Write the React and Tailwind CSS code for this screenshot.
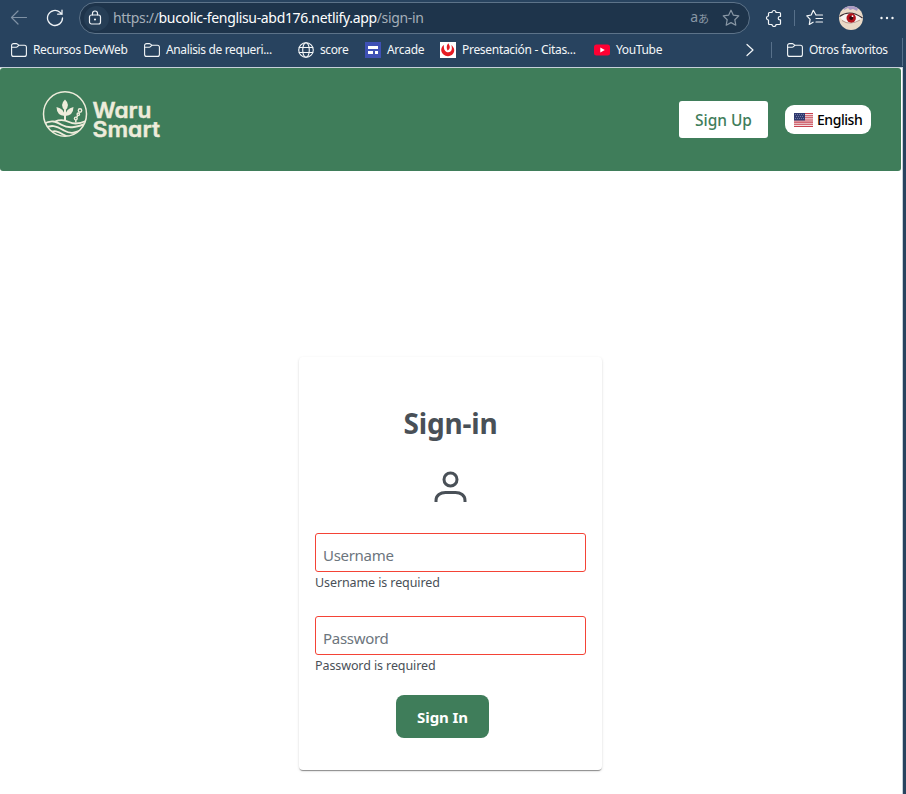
import React from "react";

const line = { fill: "none", stroke: "currentColor", strokeLinecap: "round", strokeLinejoin: "round" };

function Folder() {
  return (
    <svg className="block h-4 w-4 shrink-0" viewBox="0 0 16 16" {...line} strokeWidth="1.1">
      <path d="M.6 3.600a2 2 0 0 1 2-2h2.700c.5 0 .9.2 1.200.5L7.900 3.300h5.500a2 2 0 0 1 2 2v7.100a2 2 0 0 1-2 2H2.600a2 2 0 0 1-2-2z" />
      <path d="M.8 5.200h4.500c.5 0 .9-.2 1.200-.5l1.300-1.300" />
    </svg>
  );
}

function AddressBar() {
  return (
    <div className="flex h-9 w-full items-center">
      <svg className="ml-[10px] block h-[18px] w-[18px] text-[#7f91a4]" viewBox="0 0 18 18" {...line} strokeWidth="1.2">
        <path d="M16.500 8.500H1.500M8 2 1.500 8.500 8 15" />
      </svg>
      <svg className="ml-[18px] block h-[18px] w-[18px] text-[#eef2f6]" viewBox="0 0 18 18" {...line} strokeWidth="1.3">
        <path d="M16.500 9a7.500 7.500 0 1 1-2.600-5.700L16 5.200M16 1.200v4h-4.300" />
      </svg>
      <div className="ml-[15px] flex h-8 w-[671px] items-center rounded-full border border-[#5d7389] bg-[#1e344b] pl-1 pr-[9px]">
        <div className="flex h-[25px] w-[25px] items-center justify-center rounded-full bg-[#263e56]">
          <svg className="mr-[3px] block h-[16px] w-[14px] text-[#eef2f6]" viewBox="0 0 14 16" {...line} strokeWidth="1.200">
            <rect x="1.500" y="5" width="11" height="9" rx="2" />
            <path d="M4.500 4.800V3.500a2.500 2.500 0 0 1 5 0v1.300" />
            <circle cx="7" cy="9.500" r=".5" fill="currentColor" />
          </svg>
        </div>
        <div className="ml-1 whitespace-nowrap text-[14px] leading-5 tracking-[-0.335px] text-[#a5afb9]">
          https://<span className="text-white">bucolic-fenglisu-abd176.netlify.app</span>/sign-in
        </div>
        <div className="ml-auto flex items-center text-[#8997a5]">
          <span className="mb-[3px] text-[14px] leading-4">a</span>
          <span className="font-['Noto_Sans_CJK_JP',sans-serif] text-[11px] leading-4">あ</span>
          <svg className="ml-[13px] block h-[18px] w-[18px]" viewBox="0 0 18 18" {...line} strokeWidth="1.200">
            <path d="m9 1.200 2.400 5 5.400.7-4 3.800 1 5.500L9 13.600l-4.800 2.600 1-5.500-4-3.800 5.400-.7z" />
          </svg>
        </div>
      </div>
      <svg className="ml-[15px] block h-[18px] w-[18px] text-[#f3f6f8]" viewBox="0 0 18 18" {...line} strokeWidth="1.200">
        <path d="M4.500 3.500H7a2 2 0 0 1 4 0h3.500a1 1 0 0 1 1 1v3h-.6a1.700 1.700 0 0 0 0 3.400h.6v3.600a1 1 0 0 1-1 1H11a2 2 0 0 1-4 0H4.500a1 1 0 0 1-1-1V11a2 2 0 0 1 0-4V4.500a1 1 0 0 1 1-1z" />
      </svg>
      <div className="ml-[11px] h-4 w-px bg-[#57708a]" />
      <svg className="ml-[11px] block h-[18px] w-[18px] text-[#f3f6f8]" viewBox="0 0 18 18" {...line} strokeWidth="1.200">
        <path d="M10 6 7.300 1.300 5.200 6 .8 6.800l3.300 3.500-.8 5.200 3.800-2.300M10 6h6.500M10 9.500h6.500M10 13h6.500" />
      </svg>
      <svg className="ml-[15px] block h-6 w-6" viewBox="0 0 24 24">
        <defs>
          <clipPath id="avatar"><circle cx="12" cy="12" r="12" /></clipPath>
        </defs>
        <g clipPath="url(#avatar)">
          <rect width="24" height="24" fill="#ead9c6" />
          <path d="M4 0h16l-2 5-4-2-3 1-2-2-4 2z" fill="#a99ac4" />
          <path d="M1 11Q11 4 23 12Q17 18 11 17.500Q4 16 1 11z" fill="#f7f4f0" />
          <path d="M.5 10.500Q11 2.800 23.500 12" fill="none" stroke="#392b32" strokeWidth="1.200" />
          <path d="M3 14.500Q11 20 21 14" fill="none" stroke="#9b7469" strokeWidth=".7" />
          <circle cx="12.200" cy="12" r="4.700" fill="#b3131b" />
          <circle cx="12.200" cy="12" r="2" fill="#31090d" />
          <circle cx="13.500" cy="10.200" r=".9" fill="#fff" />
        </g>
      </svg>
      <svg className="ml-[16px] block h-4 w-4" viewBox="0 0 16 16" fill="#f3f6f8">
        <circle cx="2.500" cy="8" r="1.200" /><circle cx="8" cy="8" r="1.200" /><circle cx="13.500" cy="8" r="1.200" />
      </svg>
    </div>
  );
}

function Bookmark({ icon, label, className }) {
  return (
    <div className={`flex shrink-0 items-center ${className}`}>
      {icon}
      <span className="ml-[6px] whitespace-nowrap text-[12px] leading-4">{label}</span>
    </div>
  );
}

function Bookmarks() {
  return (
    <div className="flex h-7 w-full items-center pl-[11px] text-[#f3f6f8]">
      <Bookmark className="w-[133px] tracking-[-0.42px]" icon={<Folder />} label="Recursos DevWeb" />
      <Bookmark className="w-[154px] tracking-[-0.36px]" icon={<Folder />} label="Analisis de requeri..." />
      <Bookmark className="w-[67px] tracking-[-0.4px]" label="score" icon={
        <svg className="block h-4 w-4" viewBox="0 0 16 16" {...line} strokeWidth="1.100">
          <circle cx="8" cy="8" r="7.300" /><ellipse cx="8" cy="8" rx="3.300" ry="7.300" /><path d="M1.200 5.500h13.600M1.200 10.500h13.600" />
        </svg>} />
      <Bookmark className="w-[75px] tracking-[-0.3px]" label="Arcade" icon={
        <svg className="block h-4 w-4" viewBox="0 0 16 16">
          <rect width="16" height="16" fill="#3f51b5" /><path d="M3 4h10v3H3zM3 9h5v3H3zM10 9h3v3h-3z" fill="#fff" />
        </svg>} />
      <Bookmark className="w-[154px] tracking-[-0.3px]" label="Presentación - Citas..." icon={
        <svg className="block h-4 w-4" viewBox="0 0 16 16">
          <rect width="16" height="16" fill="#fff" />
          <path d="M4 3C1 5 0 9 3.200 12.300c2.800 2.800 7.300 2.500 9.600-.2 2.500-3 1.700-6.400-1.500-9.100.8 2.500.9 5-.5 6.300-1.700 1.500-4.200 1.200-5.500-.3C3.800 7.300 3.600 5 4 3z" fill="#e51b23" />
          <path d="M8.300 1.200C6.200 3.300 6.500 6 7.500 8.500 11 6.500 9.800 3.800 8.300 1.200z" fill="#e51b23" />
        </svg>} />
      <Bookmark className="w-[148px] tracking-[-0.35px]" label="YouTube" icon={
        <svg className="block h-4 w-4" viewBox="0 0 16 16"><rect y="2.500" width="16" height="11" rx="2.500" fill="#ff0033" /><path d="m6.300 5.600 4.500 2.400-4.500 2.400z" fill="#fff" /></svg>} />
      <svg className="block h-4 w-4" viewBox="0 0 16 16" {...line} strokeWidth="1.200"><path d="m5 2.500 6 5.500-6 5.500" /></svg>
      <div className="ml-[13px] h-4 w-px bg-[#57708a]" />
      <Bookmark className="ml-[15px] tracking-[-0.36px]" icon={<Folder />} label="Otros favoritos" />
      <div className="ml-auto mr-[3px] mt-1 h-7 w-px bg-[#57708a]" />
    </div>
  );
}

function Logo() {
  return (
    <svg className="block h-[52px] w-[122px]" viewBox="0 0 122 52" fill="none" stroke="#eeecdb" strokeWidth="1.500">
      <defs><clipPath id="emblem"><ellipse cx="23" cy="26" rx="21.500" ry="22" /></clipPath></defs>
      <ellipse cx="23" cy="26" rx="21.500" ry="22.200" />
      <g clipPath="url(#emblem)" strokeWidth="1.900">
        <path d="M0 37C9 31 14 33.500 20 37S33 40 46 35M0 42C9 35 15 38.500 22 42.500S33 45 43 41M5 46C12 41 17 44 21 46.500S28 49 35 47M13 33.500Q20 30.500 27 34T44 33" />
      </g>
      <path d="M23 33V22" strokeWidth="2" />
      <g fill="#eeecdb" stroke="none">
        <path d="M23 11.500q-6 5.500 0 11.500 6-6 0-11.500zM14.500 19q.2 8.500 8.200 9-.5-7.500-8.200-9zM31.500 19q-.2 8.500-8.200 9 .5-7.500 8.200-9z" />
      </g>
      <path d="M33.800 34.500v-2.500M34.800 29l1-1.500" strokeWidth="1.500" />
      <circle cx="33.800" cy="30.500" r="1.400" strokeWidth="1.400" />
      <circle cx="36.300" cy="26.200" r="1.200" strokeWidth="1.400" />
      <circle cx="38" cy="22.500" r="1.700" strokeWidth="1.400" />
      <g fill="#eeecdb" stroke="#eeecdb" strokeWidth=".4" className="font-['Inter',sans-serif] text-[21.500px] font-semibold leading-none [font-feature-settings:'cv11']">
        <text x="50.500" y="29.500" textLength="59" lengthAdjust="spacingAndGlyphs">Waru</text>
        <text x="50.500" y="49" textLength="67.500" lengthAdjust="spacingAndGlyphs">Smart</text>
      </g>
    </svg>
  );
}

function Flag() {
  return (
    <svg className="block h-[14px] w-[19px]" viewBox="0 0 19 14">
      <rect width="19" height="14" fill="#f2dfe1" />
      <path d="M0 .5h19M0 2.700h19M0 4.800h19M0 7h19M0 9.100h19M0 11.300h19M0 13.500h19" stroke="#c8414f" strokeWidth="1.080" />
      <rect width="11" height="7.500" fill="#313a70" />
      <path d="M1 1.500h9M2 3.500h8M1 5.500h9" stroke="#b9bfd5" strokeWidth=".7" strokeDasharray=".7 1.300" />
    </svg>
  );
}

function Field({ label, type }) {
  return (
    <div className="h-[83px]">
      <input
        type={type}
        placeholder={label}
        className="block h-[39px] w-full rounded-[3px] border border-[#f44336] bg-white pl-[7px] pr-2 pt-[5px] text-[15px] tracking-[-0.3px] text-[#495057] outline-none placeholder:text-[#6c757d]"
      />
      <p className="mt-[2px] text-[12.5px] leading-[18px] tracking-[-0.1px] text-[#495057]">{label} is required</p>
    </div>
  );
}

export default function App() {
  return (
    <div className="flex h-[794px] w-[906px] flex-col overflow-hidden bg-[#28435f] font-['Noto_Sans',sans-serif]">
      <header className="h-[67px] shrink-0">
        <AddressBar />
        <Bookmarks />
      </header>
      <main className="mr-[3px] flex min-h-0 flex-1 flex-col border-r border-t border-[#c6d0d9] bg-white">
        <nav className="mr-px flex h-[103px] shrink-0 items-center rounded-[3px] bg-[#3f7d5a] pl-[42px] pr-[30px]">
          <div className="mb-[12px]"><Logo /></div>
          <button className="ml-auto h-[37px] w-[89px] rounded-[3px] bg-white pt-[3px] text-[15.5px] font-medium tracking-[-0.05px] text-[#3f7d5a]">Sign Up</button>
          <button className="ml-[17px] flex h-[29px] w-[86px] items-center rounded-[9px] bg-white pl-[9px] text-[14px] font-medium tracking-[-0.45px] text-black">
            <Flag /><span className="ml-1">English</span>
          </button>
        </nav>
        <section className="ml-[299px] mt-[186px] flex h-[413px] w-[303px] flex-col rounded-[4px] bg-white px-4 shadow-[0_2px_1px_-1px_rgba(0,0,0,.3),0_1px_1px_rgba(0,0,0,.14),0_1px_3px_rgba(0,0,0,.12)]">
          <h1 className="mt-[46px] text-center text-[28px] font-bold leading-[40px] tracking-[-0.15px] text-[#495057]">Sign-in</h1>
          <svg className="mx-auto mt-[28px] block h-8 w-[33px] shrink-0 text-[#495057]" viewBox="0 0 33 32" fill="none" stroke="currentColor" strokeWidth="3">
            <circle cx="16.500" cy="8.500" r="6.500" />
            <path d="M2 31V29.500c0-5.200 4.500-8 9.500-8h10c5 0 9.500 2.800 9.500 8V31" />
          </svg>
          <form className="mt-[30px] flex flex-col">
            <Field label="Username" type="text" />
            <Field label="Password" type="password" />
            <button type="button" className="ml-[81px] mt-[-4px] h-[43px] w-[93px] rounded-[8px] bg-[#3f7d5a] pt-[2px] text-[15px] font-bold tracking-[-0.1px] text-white">Sign In</button>
          </form>
        </section>
      </main>
    </div>
  );
}
